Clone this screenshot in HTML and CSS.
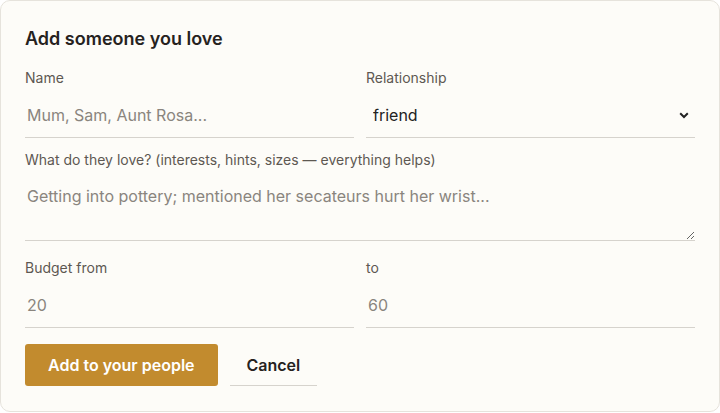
FILE: index.html
```html
<!DOCTYPE html>
<html lang="en">
<head>
  <meta charset="UTF-8" />
  <meta name="viewport" content="width=device-width, initial-scale=1.0" />
  <title>Add someone you love</title>
  <link rel="stylesheet" href="styles.css">
</head>
<body>
  <!-- Add person card -->
  <form class="card">
    <h2>Add someone you love</h2>

    <div class="row two">
      <div class="field">
        <label for="name">Name</label>
        <input type="text" id="name" placeholder="Mum, Sam, Aunt Rosa..." />
      </div>
      <div class="field">
        <label for="rel">Relationship</label>
        <div class="select-wrap">
          <select id="rel">
            <option>friend</option>
            <option>partner</option>
            <option>parent</option>
            <option>sibling</option>
            <option>child</option>
            <option>colleague</option>
          </select>
          <svg class="chevron" width="10" height="7" viewBox="0 0 10 7">
            <path d="M1.2 1.3 L5 5 L8.8 1.3" fill="none" stroke="#222" stroke-width="2" />
          </svg>
        </div>
      </div>
    </div>

    <div class="row notes">
      <div class="field">
        <label for="loves">What do they love? (interests, hints, sizes — everything helps)</label>
        <textarea id="loves" placeholder="Getting into pottery; mentioned her secateurs hurt her wrist..."></textarea>
      </div>
    </div>

    <div class="row two">
      <div class="field">
        <label for="from">Budget from</label>
        <input type="text" id="from" placeholder="20" />
      </div>
      <div class="field">
        <label for="to">to</label>
        <input type="text" id="to" placeholder="60" />
      </div>
    </div>

    <div class="actions">
      <button type="button" class="btn">Add to your people</button>
      <button type="button" class="btn-ghost">Cancel</button>
    </div>
  </form>
</body>
</html>
```

FILE: styles.css
```css
html, body {
  margin: 0;
  background: #ffffff;
}
body {
  font-family: Inter, "Noto Sans", sans-serif;
  color: #2a2622;
}
.card {
  box-sizing: border-box;
  width: 720px;
  height: 412px;
  background: #fdfcf8;
  border: 1px solid #e6e3dc;
  border-radius: 10px;
  padding: 26px 24px 24px;
}
.card h2 {
  margin: 0 0 18px;
  font-size: 18px;
  line-height: 24px;
  font-weight: 600;
  color: #26221e;
}
.row {
  margin-bottom: 13px;
}
.row.notes {
  margin-bottom: 18px;
}
.row.two {
  display: grid;
  grid-template-columns: 1fr 1fr;
  gap: 12px;
}
.field label {
  display: block;
  font-size: 14px;
  line-height: 18px;
  color: #5d5852;
  margin-bottom: 5px;
}
.field input,
.field textarea,
.field select {
  box-sizing: border-box;
  display: block;
  width: 100%;
  margin: 0;
  border: none;
  border-bottom: 1px solid #d6d3cd;
  border-radius: 0;
  background: transparent;
  font-family: inherit;
  font-size: 16px;
  line-height: 24px;
  color: #2a2622;
  padding: 10px 2px;
  outline: none;
}
.field input {
  height: 46px;
}
.field textarea {
  height: 67px;
  resize: vertical;
}
::placeholder {
  color: #8a857e;
  opacity: 1;
}
.select-wrap {
  position: relative;
}
.field select {
  height: 46px;
  appearance: none;
  -webkit-appearance: none;
  padding-left: 7px;
  color: #222;
}
.chevron {
  position: absolute;
  right: 6px;
  top: 20px;
  pointer-events: none;
}
.actions {
  display: flex;
  gap: 12px;
  margin-top: 16px;
}
.btn {
  height: 42px;
  padding: 0 23px;
  border: none;
  border-radius: 3px;
  background: #c28b2e;
  color: #fff;
  font-family: inherit;
  font-size: 16px;
  font-weight: 600;
  cursor: pointer;
}
.btn-ghost {
  height: 42px;
  padding: 0 17px;
  border: none;
  border-bottom: 1px solid #d6d3cd;
  background: transparent;
  color: #26221e;
  font-family: inherit;
  font-size: 16px;
  font-weight: 600;
  cursor: pointer;
}
```
